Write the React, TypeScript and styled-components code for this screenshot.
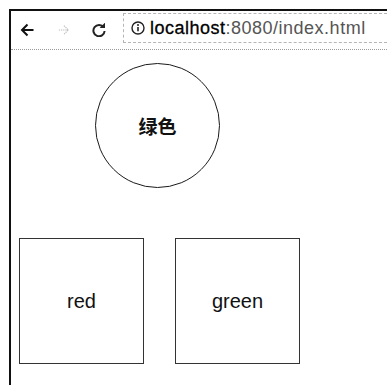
import React from 'react';
import styled, { createGlobalStyle } from 'styled-components';

const GlobalStyle = createGlobalStyle`
  html, body {
    margin: 0;
    padding: 0;
    background: #ffffff;
    font-family: "Liberation Sans", Arial, sans-serif;
    overflow: hidden;
  }
`;

// 브라우저 창 틀
const BrowserFrame = styled.div`
  margin: 9px 0 0 9px;
  height: calc(100vh - 9px);
  box-sizing: border-box;
  border-top: 2px solid #111;
  border-left: 2px solid #111;
  display: flex;
  flex-direction: column;
`;

const Toolbar = styled.div`
  height: 38px;
  flex-shrink: 0;
  display: flex;
  align-items: center;
  padding-left: 9px;
  border-bottom: 1px dotted #9a9a9a;
`;

const NavButton = styled.span<{ $gap: number }>`
  display: flex;
  align-items: center;
  justify-content: center;
  width: 14px;
  height: 14px;
  margin-right: ${(p) => p.$gap}px;
`;

const AddressBar = styled.div`
  flex: 1;
  height: 30px;
  align-self: flex-start;
  margin-top: 2px;
  box-sizing: border-box;
  border: 1px dashed #b5b5b5;
  border-right: none;
  display: flex;
  align-items: center;
  padding-left: 7px;
  gap: 5px;
  white-space: nowrap;
  overflow: hidden;
`;

const Host = styled.span`
  font-size: 18px;
  letter-spacing: 0.5px;
  color: #000;
  -webkit-text-stroke: 0.3px #000;
`;

const UrlRest = styled.span`
  color: #555;
  -webkit-text-stroke: 0;
`;

const Content = styled.main`
  flex: 1;
  padding: 13px 0 0 8px;
  display: flex;
  flex-direction: column;
`;

const Circle = styled.div`
  width: 125px;
  height: 125px;
  margin-left: 76px;
  border: 1px solid #1a1a1a;
  border-radius: 50%;
  box-sizing: border-box;
  display: flex;
  align-items: center;
  justify-content: center;
  font-family: "Noto Sans CJK SC", "Liberation Sans", sans-serif;
  font-size: 19px;
  font-weight: 700;
  color: #111;
`;

const BoxRow = styled.div`
  display: flex;
  gap: 31px;
  margin-top: 50px;
`;

const Box = styled.div`
  width: 125px;
  height: 126px;
  box-sizing: border-box;
  border: 1px solid #333;
  display: flex;
  align-items: center;
  justify-content: center;
  font-size: 20px;
  color: #111;
`;

const BackIcon = () => (
  <svg width="14" height="14" viewBox="0 0 14 14" fill="none">
    <path d="M13.5 7H2M7.5 1.5L2 7l5.5 5.5" stroke="#111" strokeWidth="2" />
  </svg>
);

const ForwardIcon = () => (
  <svg width="12" height="12" viewBox="0 0 14 14" fill="none">
    <path d="M1 7h11M7 2l5 5-5 5" stroke="#bdbdbd" strokeWidth="1.4" strokeDasharray="1.5 1" />
  </svg>
);

const ReloadIcon = () => (
  <svg width="14" height="14" viewBox="0 0 14 14" fill="none">
    <path d="M11.6 4.4A5.6 5.6 0 1 0 12.6 8" stroke="#222" strokeWidth="2" />
    <path d="M7.6 5h5.4V-0.4z" fill="#222" />
  </svg>
);

const InfoIcon = () => (
  <svg width="14" height="14" viewBox="0 0 14 14" fill="none">
    <circle cx="7" cy="7" r="6" stroke="#222" strokeWidth="1.4" />
    <path d="M7 6v4.2" stroke="#222" strokeWidth="1.6" />
    <circle cx="7" cy="4" r="1" fill="#222" />
  </svg>
);

const App = () => {
  return (
    <>
      <GlobalStyle />
      <BrowserFrame>
        <Toolbar>
          <NavButton $gap={23}>
            <BackIcon />
          </NavButton>
          <NavButton $gap={21}>
            <ForwardIcon />
          </NavButton>
          <NavButton $gap={17}>
            <ReloadIcon />
          </NavButton>
          <AddressBar>
            <InfoIcon />
            <Host>
              localhost<UrlRest>:8080/index.html</UrlRest>
            </Host>
          </AddressBar>
        </Toolbar>
        <Content>
          <Circle>绿色</Circle>
          <BoxRow>
            <Box>red</Box>
            <Box>green</Box>
          </BoxRow>
        </Content>
      </BrowserFrame>
    </>
  );
};

export default App;
